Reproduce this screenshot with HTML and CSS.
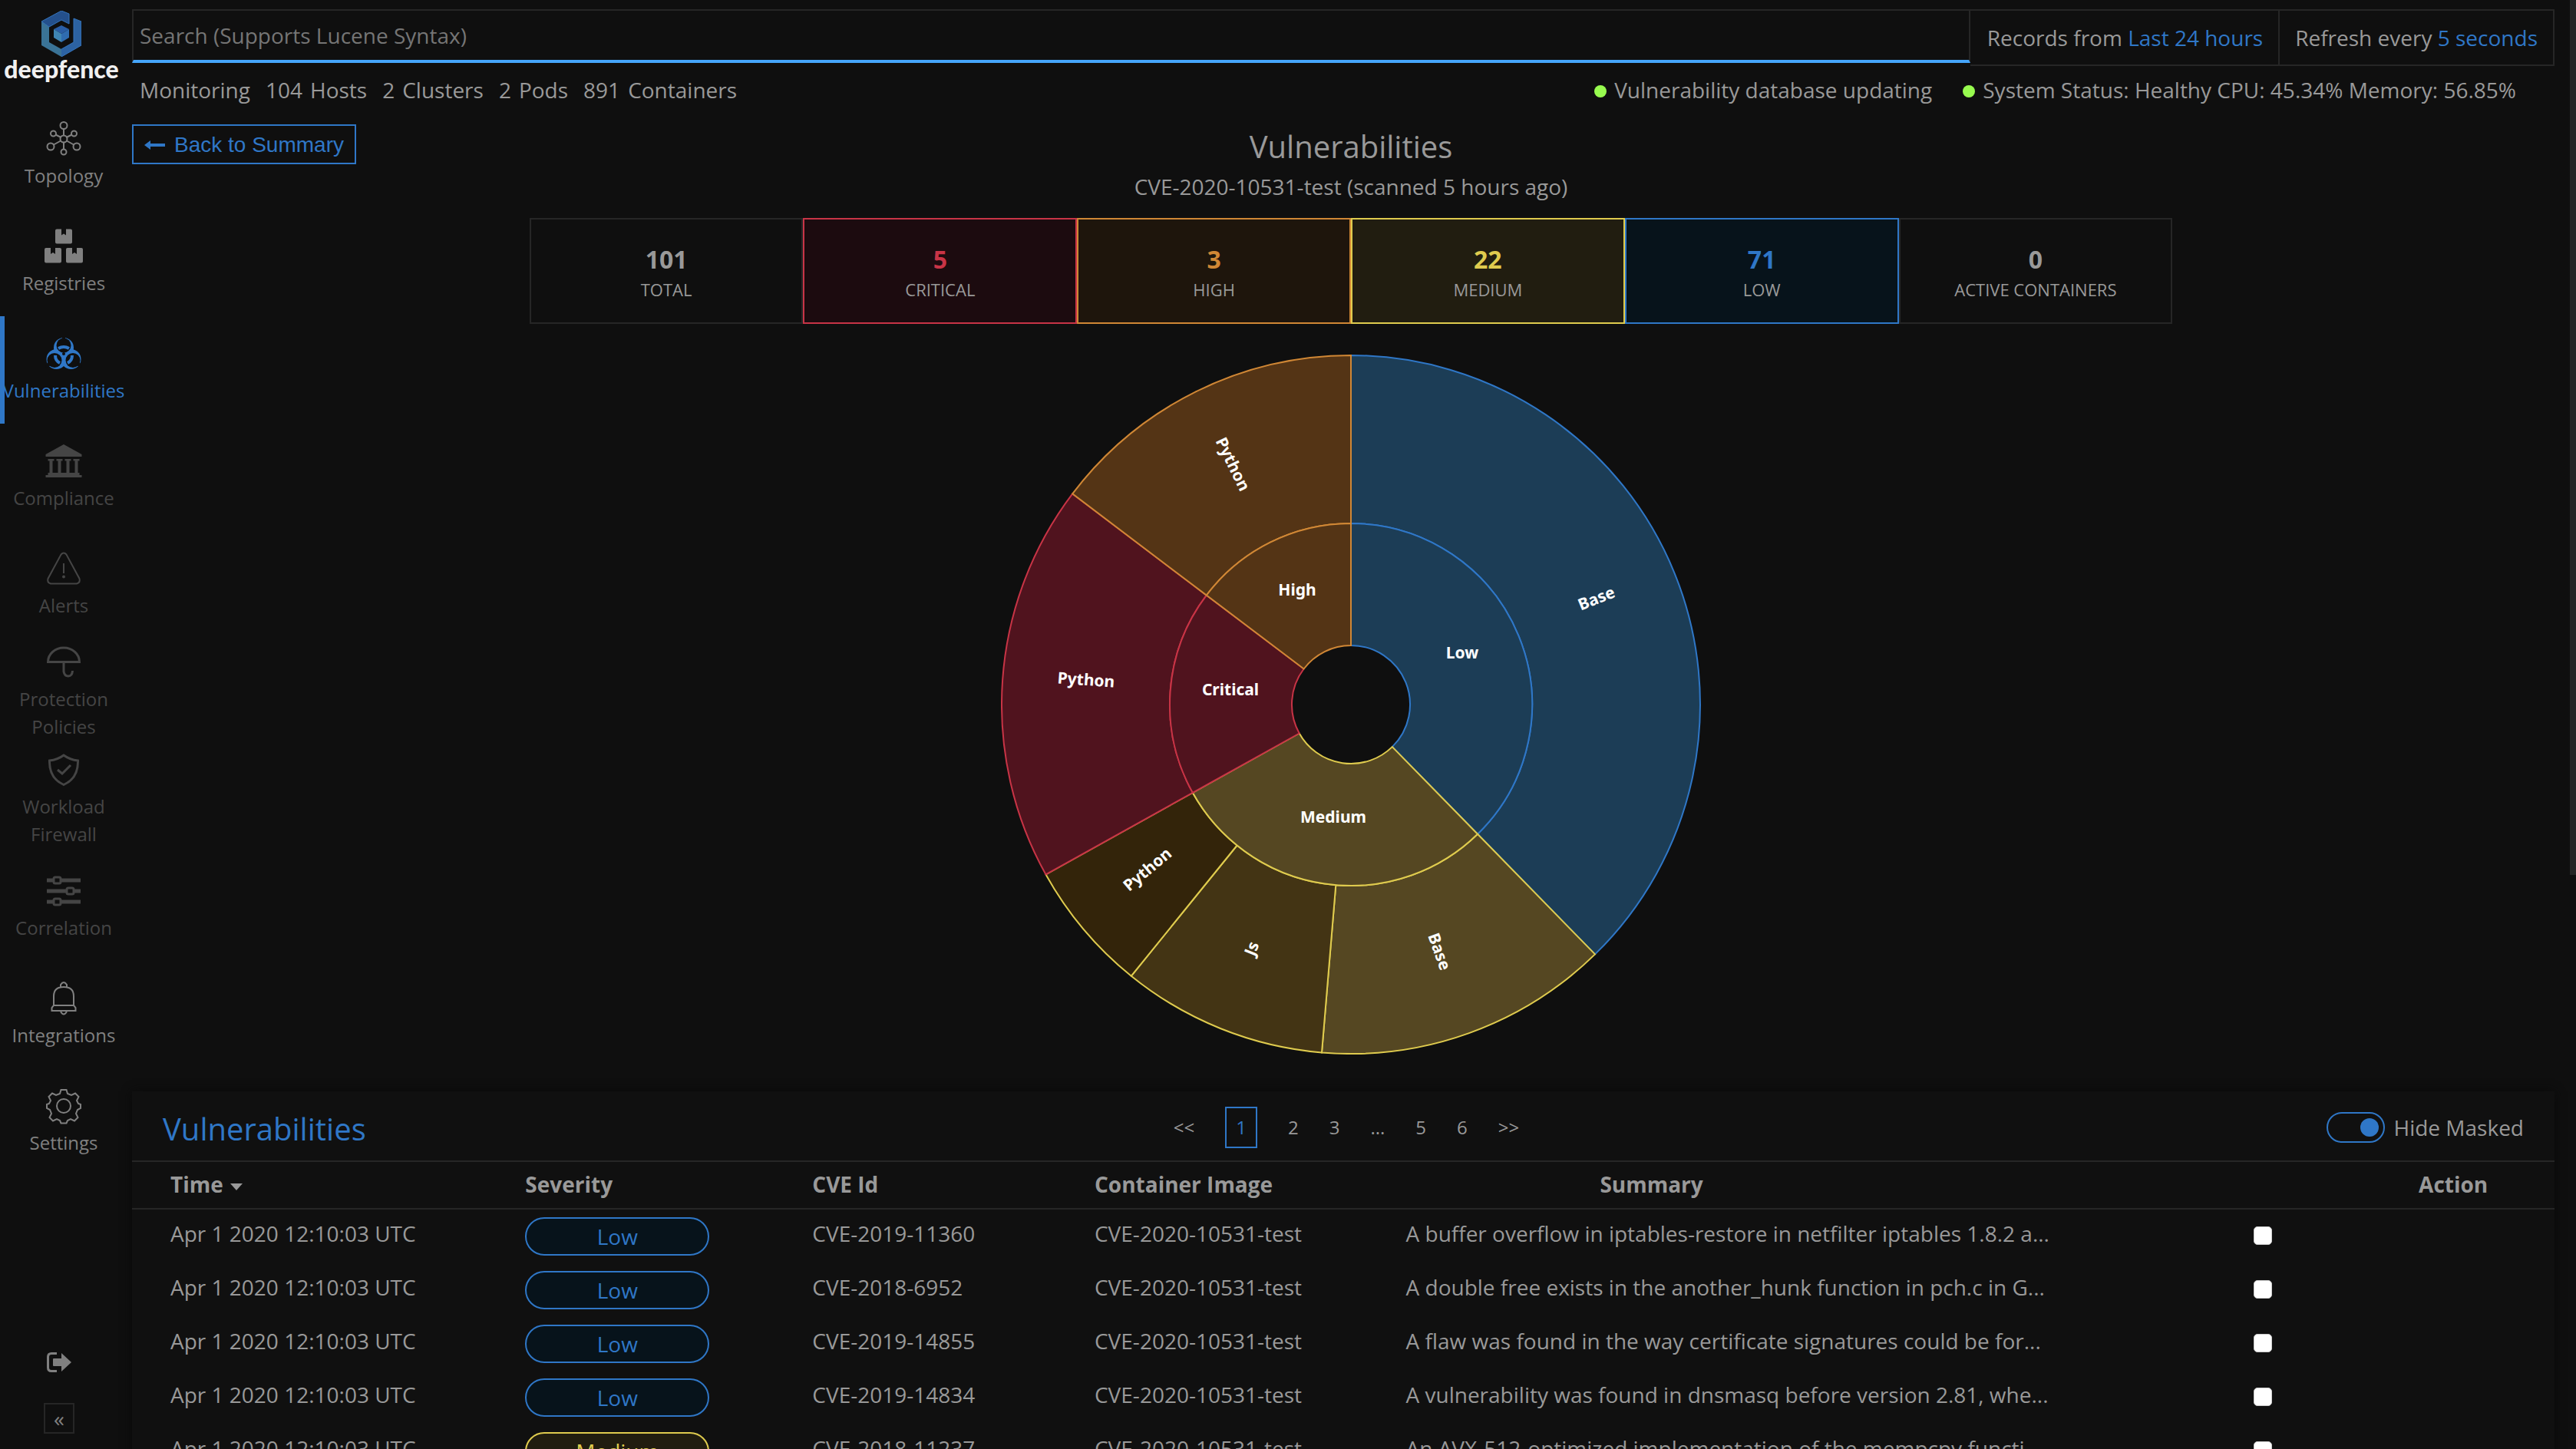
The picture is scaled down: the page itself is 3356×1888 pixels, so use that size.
FILE: index.html
```html
<!DOCTYPE html>
<html lang="en">
<head>
    <meta charset="UTF-8">
    <title>Deepfence - Vulnerabilities</title>
    <link rel="stylesheet" href="styles.css">
</head>
<body>
    <aside class="sidebar">
        <a href="#" class="logo">
            <svg width="52" height="60" viewBox="0 0 52 60">
                <path fill="#24508c" d="M0 14 26 0l10 4v13l-10-5-16 9z"/>
                <path fill="#3a7396" d="M0 14l10 7v20l16 9v10L0 45z"/>
                <path fill="#2c62a2" d="M26 60V50l16-9V10l10 4v31z"/>
                <path fill="#2a5ea6" d="M16 24l10-5 10 5-10 6z"/>
                <path fill="#3f86b4" d="M16 24l10 6v11l-10-6z"/>
                <path fill="#2f6cb0" d="M36 24l-10 6v11l10-6z"/>
                <path fill="none" stroke="#3474bb" d="M0 14 26 0l10 4v13l-10-5-16 9zM26 50l16-9V10l10 4v31L26 60"/>
            </svg>
            <span>deepfence</span>
        </a>

        <nav class="side-nav">
            <a href="#" class="nav-item">
                <svg class="icon line" viewBox="-24 -24 48 48">
                    <circle r="4.500"/><circle cy="-17.500" r="4.500"/><circle cy="17" r="3.500"/>
                    <circle cx="-13.500" cy="-7" r="3.500"/><circle cx="13.500" cy="-7" r="3.500"/>
                    <circle cx="-17" cy="10" r="4.500"/><circle cx="17" cy="10" r="4.500"/>
                    <path d="M0-13v8.500M0 4.500v9M-10.500-5.500l7 3.500M10.500-5.500l-7 3.500M-13 7.500l9-5M13 7.500l-9-5"/>
                </svg>
                <span>Topology</span>
            </a>
            <a href="#" class="nav-item">
                <svg class="icon" viewBox="-25 -24 50 48">
                    <path d="M-11-20.500q0-2 2-2h6v8l3-2 3 2v-8h6q2 0 2 2v15q0 2-2 2H-9q-2 0-2-2z"/>
                    <path d="M-25 4q0-2 2-2h6v8l3-2 3 2V2h6q2 0 2 2v15.500q0 2-2 2h-18q-2 0-2-2z"/>
                    <path d="M3 4q0-2 2-2h6v8l3-2 3 2V2h6q2 0 2 2v15.500q0 2-2 2H5q-2 0-2-2z"/>
                </svg>
                <span>Registries</span>
            </a>
            <a href="#" class="nav-item active">
                <svg class="icon" viewBox="-24 -24 48 48">
                    <circle cy="-8" r="13"/><circle cx="-9.500" cy="7" r="13"/><circle cx="9.500" cy="7" r="13"/>
                    <g class="hole">
                        <circle cy="-11" r="9.500"/><circle cx="-12" cy="8.500" r="9.500"/><circle cx="12" cy="8.500" r="9.500"/>
                        <path d="M-2-24h4v8h-4zM-24 14l5-3 2 4-6 3zM24 14l-5-3-2 4 6 3z"/>
                    </g>
                    <path class="ring" d="M-7-7Q0-11 7-7M-11 2q0 7 6 10M11 2q0 7-6 10"/>
                    <circle class="hole" r="2"/>
                </svg>
                <span>Vulnerabilities</span>
            </a>
            <a href="#" class="nav-item disabled">
                <svg class="icon" viewBox="-24 -24 48 48">
                    <path d="M0-22-23.500-9v3h47v-3zM-20.500-3h8v2.500h-2v16h-4v-16h-2zM-9.500-3h8v2.500h-2v16h-4v-16h-2zM1.500-3h8v2.500h-2v16h-4v-16h-2zM12.500-3h8v2.500h-2v16h-4v-16h-2zM-20.500 15h41v3h3v3h-47v-3h3z"/>
                </svg>
                <span>Compliance</span>
            </a>
            <a href="#" class="nav-item disabled">
                <svg class="icon line" viewBox="-24 -24 48 48">
                    <path d="M-3.500-18.500q3.500-4 7 0L20.500 13q1.500 5-3.500 6.500h-34q-5-1.500-3.500-6.500zM0-7V6"/>
                    <circle class="dot" cy="10.500" r="2"/>
                </svg>
                <span>Alerts</span>
            </a>
            <a href="#" class="nav-item disabled">
                <svg class="icon line bold" viewBox="-24 -24 48 48">
                    <path d="M-20.500-.500a20.500 18.500 0 0 1 41 0zM0 0v12q1 6 6 6t5.500-7"/>
                </svg>
                <span>Protection<br>Policies</span>
            </a>
            <a href="#" class="nav-item disabled">
                <svg class="icon line bold" viewBox="-24 -24 48 48">
                    <path d="M0-19q8 6 18.500 7Q19 11 0 19.500-19 11-18.500-12-8-13 0-19zM-8 0l6 5L9-6"/>
                </svg>
                <span>Workload<br>Firewall</span>
            </a>
            <a href="#" class="nav-item disabled">
                <svg class="icon line bold" viewBox="-24 -24 48 48">
                    <path class="rail" d="M-22-14h9M-4-14h26M-22 0H4M13 0h9M-22 14h9M-4 14h26"/>
                    <rect x="-13" y="-18" width="9" height="8" rx="2"/><rect x="4" y="-4" width="9" height="8" rx="2"/><rect x="-13" y="10" width="9" height="8" rx="2"/>
                </svg>
                <span>Correlation</span>
            </a>
            <a href="#" class="nav-item">
                <svg class="icon line" viewBox="-24 -24 48 48">
                    <path d="M-13 9V-3q0-12 13-12T13-3V9l2.500 3v4h-31v-4zM-13 9h26M-4-15v-3q4-6 8 0v3M-4 17q4 7 8 0"/>
                </svg>
                <span>Integrations</span>
            </a>
            <a href="#" class="nav-item">
                <svg class="icon line" viewBox="-24 -24 48 48">
                    <circle r="9"/>
                    <path d="M-3.500-21h7l1.500 5 5 2 5-2.500 4.500 4.500L17-7l2 4 3 1v5l-4 2-2 5 2.500 5-4.500 4.500-5-2.500-4 2-1.500 3.500h-7L-5 19l-4-2-5 2.500-4.500-4.500L-16 10l-2-5-4-2v-5l3-1 2-4-2.500-5 4.500-4.500 5 2.500 5-2z"/>
                </svg>
                <span>Settings</span>
            </a>
        </nav>

        <div class="side-bottom">
            <button class="logout" aria-label="Logout">
                <svg width="32" height="26" viewBox="0 0 32 26">
                    <path fill="none" stroke="#808080" stroke-width="3" d="M13 1.500H6Q1.500 1.500 1.500 6v14q0 4.500 4.500 4.500h7"/>
                    <path fill="#808080" d="M9 8h10V1l13 12-13 12v-7H9q-1 0-1-1V9q0-1 1-1z"/>
                </svg>
            </button>
            <button class="collapse" aria-label="Collapse menu">«</button>
        </div>
    </aside>

    <main class="main">
        <div class="top-bar">
            <input class="search" type="text" placeholder="Search (Supports Lucene Syntax)" aria-label="Search">
            <button class="top-option">Records from <span>Last 24 hours</span></button>
            <button class="top-option">Refresh every <span>5 seconds</span></button>
        </div>

        <div class="status-bar">
            <div class="counts">
                <div>Monitoring</div>
                <div><span>104</span><span>Hosts</span></div>
                <div><span>2</span><span>Clusters</span></div>
                <div><span>2</span><span>Pods</span></div>
                <div><span>891</span><span>Containers</span></div>
            </div>
            <div class="health">
                <span>Vulnerability database updating</span>
                <span>System Status: Healthy CPU: 45.34% Memory: 56.85%</span>
            </div>
        </div>

        <section class="overview">
            <div class="heading">
                <button class="back">
                    <svg width="27" height="14" viewBox="0 0 27 14"><path fill="currentColor" d="M0 7 8 1v4h19v4H8v4z"/></svg>
                    Back to Summary
                </button>
                <div class="heading-text">
                    <h1>Vulnerabilities</h1>
                    <p>CVE-2020-10531-test (scanned 5 hours ago)</p>
                </div>
            </div>

            <div class="stats">
                <div class="stat"><b>101</b><span>TOTAL</span></div>
                <div class="stat critical"><b>5</b><span>CRITICAL</span></div>
                <div class="stat high"><b>3</b><span>HIGH</span></div>
                <div class="stat medium"><b>22</b><span>MEDIUM</span></div>
                <div class="stat low"><b>71</b><span>LOW</span></div>
                <div class="stat"><b>0</b><span>ACTIVE CONTAINERS</span></div>
            </div>

            <svg class="sunburst" width="912" height="912" viewBox="-456 -456 912 912">
                <g class="arc-low">
                    <path d="M0-236V-455A455 455 0 0 1 318 325.400L165 168.800A236 236 0 0 0 0-236z"/>
                    <path d="M0-77V-236A236 236 0 0 1 165 168.800L53.800 55.100A77 77 0 0 0 0-77z"/>
                </g>
                <g class="arc-medium">
                    <path d="M165 168.800 318 325.400A455 455 0 0 1-38 453.400L-19.700 235.200A236 236 0 0 0 165 168.800z"/>
                    <path class="js" d="M-19.700 235.200-38 453.400A455 455 0 0 1-286.200 353.700L-148.400 183.500A236 236 0 0 0-19.700 235.200z"/>
                    <path class="python" d="M-148.400 183.500-286.200 353.700A455 455 0 0 1-397.500 221.400L-206.200 114.800A236 236 0 0 0-148.400 183.500z"/>
                    <path d="M53.800 55.100 165 168.800A236 236 0 0 1-206.200 114.800L-67.300 37.500A77 77 0 0 0 53.800 55.100z"/>
                </g>
                <g class="arc-critical">
                    <path d="M-206.200 114.800-397.500 221.400A455 455 0 0 1-362.800-274.600L-188.200-142.400A236 236 0 0 0-206.200 114.800z"/>
                    <path d="M-67.300 37.500-206.200 114.800A236 236 0 0 1-188.200-142.400L-61.400-46.500A77 77 0 0 0-67.300 37.500z"/>
                </g>
                <g class="arc-high">
                    <path d="M-188.200-142.400-362.800-274.600A455 455 0 0 1 0-455V-236A236 236 0 0 0-188.200-142.400z"/>
                    <path d="M-61.400-46.500-188.200-142.400A236 236 0 0 1 0-236V-77A77 77 0 0 0-61.400-46.500z"/>
                </g>
                <text x="145" y="-60">Low</text>
                <text x="-70" y="-142">High</text>
                <text x="-157" y="-12">Critical</text>
                <text x="-23" y="154">Medium</text>
                <text transform="translate(320 -138) rotate(-22)" y="7">Base</text>
                <text transform="translate(115 322) rotate(70)" y="7">Base</text>
                <text transform="translate(-129 318) rotate(-68)" y="7">Js</text>
                <text transform="translate(-265 215) rotate(-40)" y="7">Python</text>
                <text transform="translate(-345 -32) rotate(4)" y="7">Python</text>
                <text transform="translate(-154 -313) rotate(64)" y="7">Python</text>
            </svg>
        </section>

        <section class="panel">
            <div class="panel-head">
                <h2>Vulnerabilities</h2>
                <nav class="pages">
                    <a href="#">&lt;&lt;</a>
                    <a href="#" class="current">1</a>
                    <a href="#">2</a>
                    <a href="#">3</a>
                    <a href="#">...</a>
                    <a href="#">5</a>
                    <a href="#">6</a>
                    <a href="#">&gt;&gt;</a>
                </nav>
                <label class="mask"><input type="checkbox" checked>Hide Masked</label>
            </div>

            <table>
                <colgroup>
                    <col class="c-time"><col class="c-severity"><col class="c-cve"><col class="c-image">
                    <col class="c-summary"><col class="c-rest"><col class="c-check"><col class="c-action">
                </colgroup>
                <thead>
                    <tr>
                        <th class="first">Time <i class="caret"></i></th>
                        <th>Severity</th>
                        <th>CVE Id</th>
                        <th>Container Image</th>
                        <th class="center">Summary</th>
                        <th></th>
                        <th></th>
                        <th class="center action">Action</th>
                    </tr>
                </thead>
                <tbody>
                    <tr>
                        <td class="first">Apr 1 2020 12:10:03 UTC</td>
                        <td class="level"><span class="chip low">Low</span></td>
                        <td>CVE-2019-11360</td>
                        <td>CVE-2020-10531-test</td>
                        <td colspan="2">A buffer overflow in iptables-restore in netfilter iptables 1.8.2 a...</td>
                        <td class="check"><input type="checkbox" aria-label="Select CVE-2019-11360"></td>
                        <td></td>
                    </tr>
                    <tr>
                        <td class="first">Apr 1 2020 12:10:03 UTC</td>
                        <td class="level"><span class="chip low">Low</span></td>
                        <td>CVE-2018-6952</td>
                        <td>CVE-2020-10531-test</td>
                        <td colspan="2">A double free exists in the another_hunk function in pch.c in G...</td>
                        <td class="check"><input type="checkbox" aria-label="Select CVE-2018-6952"></td>
                        <td></td>
                    </tr>
                    <tr>
                        <td class="first">Apr 1 2020 12:10:03 UTC</td>
                        <td class="level"><span class="chip low">Low</span></td>
                        <td>CVE-2019-14855</td>
                        <td>CVE-2020-10531-test</td>
                        <td colspan="2">A flaw was found in the way certificate signatures could be for...</td>
                        <td class="check"><input type="checkbox" aria-label="Select CVE-2019-14855"></td>
                        <td></td>
                    </tr>
                    <tr>
                        <td class="first">Apr 1 2020 12:10:03 UTC</td>
                        <td class="level"><span class="chip low">Low</span></td>
                        <td>CVE-2019-14834</td>
                        <td>CVE-2020-10531-test</td>
                        <td colspan="2">A vulnerability was found in dnsmasq before version 2.81, whe...</td>
                        <td class="check"><input type="checkbox" aria-label="Select CVE-2019-14834"></td>
                        <td></td>
                    </tr>
                    <tr>
                        <td class="first">Apr 1 2020 12:10:03 UTC</td>
                        <td class="level"><span class="chip medium">Medium</span></td>
                        <td>CVE-2018-11237</td>
                        <td>CVE-2020-10531-test</td>
                        <td colspan="2">An AVX-512-optimized implementation of the mempcpy functi...</td>
                        <td class="check"><input type="checkbox" aria-label="Select CVE-2018-11237"></td>
                        <td></td>
                    </tr>
                </tbody>
            </table>
        </section>
    </main>
    <div class="scroll-thumb"></div>
</body>
</html>
```

FILE: styles.css
```css
* {
    box-sizing: border-box;
}

body {
    margin: 0;
    display: flex;
    height: 100vh;
    overflow: hidden;
    background: #0f0f0f;
    color: #999;
    font-family: "Open Sans", "Noto Sans", sans-serif;
    font-size: 28px;
    line-height: 38px;
}

h1, h2, p {
    margin: 0;
    font-weight: normal;
}

a {
    color: inherit;
    text-decoration: none;
}

button {
    background: none;
    border: none;
    padding: 0;
    color: inherit;
    font: inherit;
}

/* sidebar */
.sidebar {
    width: 172px;
    flex-shrink: 0;
    display: flex;
    flex-direction: column;
}

.logo {
    height: 132px;
    width: 160px;
    padding-top: 14px;
    display: flex;
    flex-direction: column;
    align-items: center;
    color: #f0f0f0;
    font-family: Lato, sans-serif;
    font-size: 32px;
    font-weight: 900;
    line-height: 32px;
}

.nav-item {
    position: relative;
    width: 166px;
    height: 140px;
    display: flex;
    flex-direction: column;
    align-items: center;
    justify-content: center;
    gap: 6px;
    color: #808080;
    font-size: 24px;
    line-height: 36px;
    text-align: center;
}

.nav-item.disabled {
    color: #454545;
}

.nav-item.active {
    color: #2f77c7;
}

.nav-item.active::before {
    content: "";
    position: absolute;
    left: 0;
    top: 0;
    width: 6px;
    height: 100%;
    background: #2f77c7;
}

.icon {
    width: 50px;
    height: 48px;
    fill: currentColor;
}

.icon.line {
    fill: none;
    stroke: currentColor;
    stroke-width: 2;
}

.icon.bold {
    stroke-width: 3;
}

.icon .rail {
    stroke-width: 5;
}

.icon .dot {
    fill: currentColor;
    stroke: none;
}

.icon .hole {
    fill: #0f0f0f;
}

.icon .ring {
    fill: none;
    stroke: currentColor;
    stroke-width: 4;
}

.side-bottom {
    width: 154px;
    margin-top: auto;
    margin-bottom: 20px;
    display: flex;
    flex-direction: column;
    align-items: center;
    gap: 40px;
}

.logout svg {
    display: block;
}

.collapse {
    width: 40px;
    height: 40px;
    border: 2px solid #262626;
    color: #808080;
    font-size: 28px;
    line-height: 30px;
}

/* top */
.main {
    flex: 1;
    min-width: 0;
}

.top-bar {
    display: flex;
    align-items: flex-start;
    padding: 12px 28px 0 0;
}

.search {
    flex: 1;
    height: 70px;
    padding: 0 10px 0 8px;
    background: none;
    border: 2px solid #262626;
    border-bottom: 4px solid #45a5fa;
    border-radius: 0;
    color: #999;
    font: inherit;
}

.search::placeholder {
    color: #757575;
}

.top-option {
    height: 74px;
    padding: 0 20px;
    border: 2px solid #262626;
    border-left: none;
}

.search + .top-option {
    padding-left: 22px;
}

.top-option span {
    color: #2f77c7;
}

.status-bar {
    display: flex;
    justify-content: space-between;
    margin-top: 12px;
    padding: 0 78px 0 10px;
}

.counts {
    display: flex;
    gap: 20px;
}

.counts div {
    display: flex;
    gap: 10px;
}

.health {
    display: flex;
    gap: 40px;
}

.health span {
    display: flex;
    align-items: center;
    gap: 10px;
}

.health span::before {
    content: "";
    width: 16px;
    height: 16px;
    margin-top: 4px;
    border-radius: 50%;
    background: #98fb4f;
}

/* overview */
.overview {
    padding-right: 8px;
    margin-top: 26px;
    display: flex;
    flex-direction: column;
    align-items: center;
}

.heading {
    width: 100%;
    display: grid;
    grid-template-columns: 1fr auto 1fr;
    align-items: start;
}

.back {
    justify-self: start;
    display: flex;
    align-items: center;
    gap: 12px;
    height: 52px;
    padding: 2px 14px 0;
    border: 2px solid #2f77c7;
    color: #2f77c7;
    font-family: "Liberation Sans", Arial, sans-serif;
}

.heading-text {
    text-align: center;
}

h1 {
    font-size: 40px;
    line-height: 58px;
    margin-bottom: 4px;
}

.stats {
    width: 67.4%;
    margin-top: 22px;
    display: flex;
}

.stat {
    flex: 1;
    display: flex;
    flex-direction: column;
    align-items: center;
    gap: 2px;
    padding: 30px 0 28px;
    border: 2px solid #262626;
}

.stat b {
    font-size: 32px;
    line-height: 44px;
}

.stat span {
    font-size: 22px;
    line-height: 30px;
}

.stat.critical {
    border-color: #c83446;
    background: #1c0b0f;
}

.stat.high {
    border-color: #d08735;
    background: #1e150c;
}

.stat.medium {
    border-color: #dfcb4e;
    background: #211d10;
}

.stat.low {
    border-color: #2f77c7;
    background: #07131b;
}

.critical b {
    color: #c83446;
}

.high b {
    color: #d08735;
}

.medium b {
    color: #dfcb4e;
}

.low b {
    color: #2f77c7;
}

.sunburst {
    margin-top: 40px;
    stroke-width: 2;
}

.arc-low {
    fill: #1c3d56;
    stroke: #2f77c7;
}

.arc-medium {
    fill: #554722;
    stroke: #dfcb4e;
}

.arc-medium .js {
    fill: #433414;
}

.arc-medium .python {
    fill: #33240a;
}

.arc-critical {
    fill: #50131e;
    stroke: #c83446;
}

.arc-high {
    fill: #543415;
    stroke: #d08735;
}

.sunburst text {
    fill: #fff;
    font-family: "Noto Sans", sans-serif;
    font-size: 21px;
    font-weight: bold;
    text-anchor: middle;
}

/* table panel */
.panel {
    margin: 48px 28px 0 0;
    background: #101010;
    box-shadow: 0 0 12px #0a0a0a;
}

.panel-head {
    display: grid;
    grid-template-columns: 1fr auto 1fr;
    align-items: center;
    height: 92px;
    padding: 4px 40px 0;
    border-bottom: 2px solid #262626;
}

h2 {
    padding-top: 4px;
    color: #2f77c7;
    font-size: 40px;
    line-height: 54px;
}

.pages {
    display: flex;
    align-items: center;
    margin-left: 8px;
    font-size: 24px;
}

.pages a {
    padding: 0 20px;
}

.pages .current {
    margin: 0 20px;
    padding: 6px 12px;
    border: 2px solid #2f77c7;
    color: #2f77c7;
}

.mask {
    justify-self: end;
    display: flex;
    align-items: center;
    gap: 12px;
    line-height: 34px;
}

.mask input {
    appearance: none;
    display: flex;
    align-items: center;
    justify-content: flex-end;
    width: 76px;
    height: 40px;
    margin: 0;
    padding: 0 6px;
    border: 2px solid #2f77c7;
    border-radius: 20px;
}

.mask input::before {
    content: "";
    width: 24px;
    height: 24px;
    border-radius: 50%;
    background: #2f77c7;
}

table {
    width: 100%;
    table-layout: fixed;
    border-collapse: separate;
    border-spacing: 0;
}

.c-time { width: 15.6%; }
.c-severity { width: 11.85%; }
.c-cve { width: 11.65%; }
.c-image { width: 12.85%; }
.c-summary { width: 21.55%; }
.c-rest { width: 10.5%; }
.c-check { width: 7.9%; }
.c-action { width: 8.1%; }

th {
    height: 62px;
    padding: 0 20px 2px;
    border-bottom: 2px solid #262626;
    text-align: left;
}

th.center {
    text-align: center;
}

th.action {
    padding-right: 28px;
}

td {
    height: 70px;
    padding: 0 20px 8px;
    white-space: nowrap;
}

.first {
    padding-left: 50px;
}

td.level {
    padding: 0 20px;
}

.caret {
    display: inline-block;
    vertical-align: middle;
    margin-left: 2px;
    border: 8px solid transparent;
    border-top: 9px solid #999;
    border-bottom: none;
}

.chip {
    display: block;
    width: 240px;
    height: 50px;
    border: 2px solid;
    border-radius: 25px;
    line-height: 46px;
    text-align: center;
}

.chip.low {
    color: #2f77c7;
    background: #07131b;
}

.chip.medium {
    color: #dfcb4e;
    background: #211d10;
}

td.check {
    padding: 0 0 2px;
    text-align: center;
}

.check input {
    appearance: none;
    display: block;
    width: 24px;
    height: 24px;
    margin: 0 auto;
    border: 1px solid #ccc;
    border-radius: 5px;
    background: #fff;
}

.scroll-thumb {
    position: absolute;
    top: 0;
    right: 0;
    width: 8px;
    height: 1140px;
    background: #262626;
}
```
